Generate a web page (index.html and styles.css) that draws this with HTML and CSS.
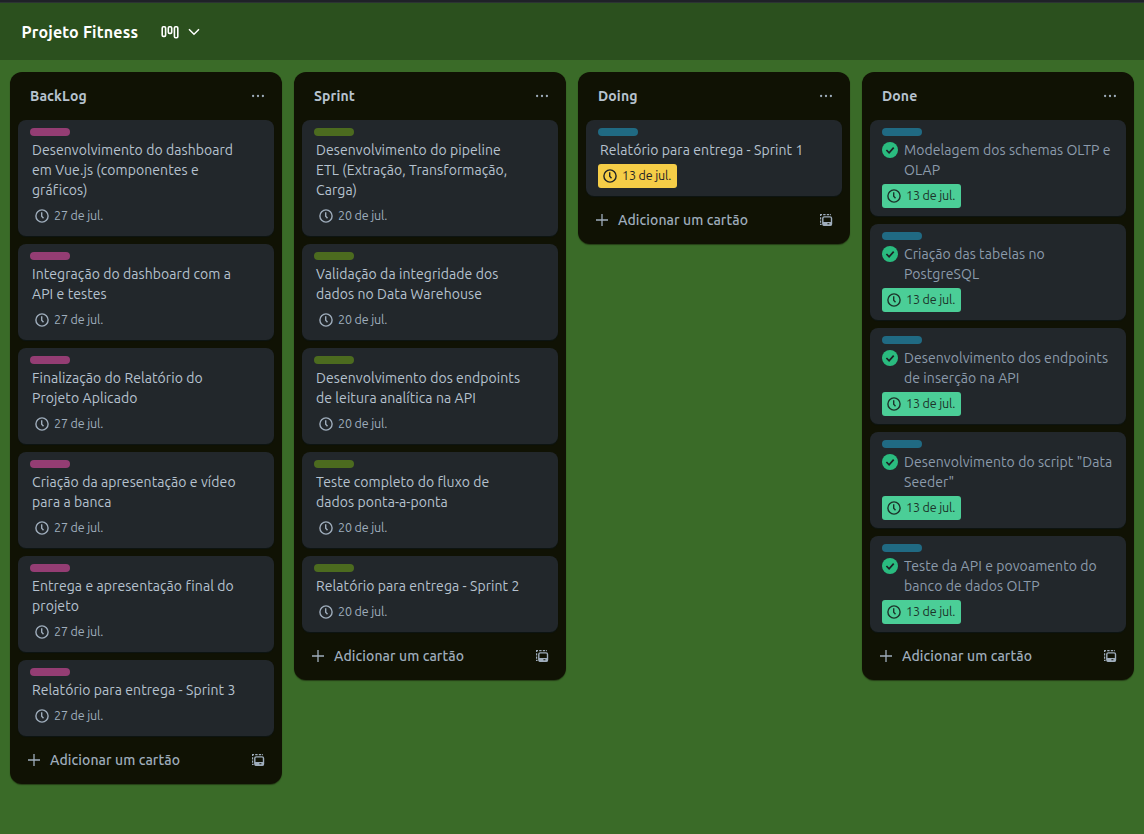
FILE: index.html
```
<!DOCTYPE html>
<html lang="pt-BR">
<head>
<meta charset="utf-8">
<title>Projeto Fitness</title>
<link rel="stylesheet" href="styles.css">
</head>
<body>
<svg class="sprite" aria-hidden="true">
  <symbol id="clock" viewBox="0 0 16 16"><circle cx="8" cy="8" r="6.1" fill="none" stroke="currentColor" stroke-width="1.4"/><path d="M7.7 4.2v4.1l1.8 1.9" fill="none" stroke="currentColor" stroke-width="1.4"/></symbol>
  <symbol id="dots" viewBox="0 0 16 16"><g fill="currentColor"><circle cx="3.1" cy="8" r="1.15"/><circle cx="8" cy="8" r="1.15"/><circle cx="12.9" cy="8" r="1.15"/></g></symbol>
  <symbol id="plus" viewBox="0 0 16 16"><path d="M8 2v12M2 8h12" fill="none" stroke="currentColor" stroke-width="1.3"/></symbol>
  <symbol id="template" viewBox="0 0 16 16"><g fill="none" stroke="currentColor" stroke-width="1.2"><path d="M2.6 4V2.6H4M5.2 2.6h2.4M8.8 2.6h2.4M2.6 5.2v2.2M2.6 8.6v2.2M2.6 11.8v.6h1M12 2.6h.8"/><rect x="4.8" y="4.9" width="8.7" height="8.4" rx="1.4" stroke-width="1.4"/></g><path d="M5 10h8.4v3.4H5zM9.4 11.2v1.2h2v-1.2z" fill="currentColor" fill-rule="evenodd"/></symbol>
  <symbol id="check" viewBox="0 0 16 16"><circle cx="8" cy="8" r="8" fill="#2abb7f"/><path d="M4.4 8l2.7 2.8 4.6-5.2" fill="none" stroke="#1d2125" stroke-width="1.7"/></symbol>
</svg>
<div class="topbar"></div>
<header class="board-header">
  <h1 class="board-title">Projeto Fitness</h1>
  <svg class="view-icon" viewBox="0 0 18 14"><g fill="none" stroke="currentColor" stroke-width="1.6"><rect x="1.2" y="1.7" width="3.4" height="9.7" rx="1.2"/><rect x="7.3" y="1.7" width="3.4" height="6.7" rx="1.2"/><rect x="13.4" y="1.7" width="3.4" height="11" rx="1.2"/></g></svg>
  <svg class="chevron" viewBox="0 0 12 8"><path d="M1 1.3l5 5 5-5" fill="none" stroke="currentColor" stroke-width="1.5"/></svg>
</header>
<main class="board">
  <section class="list pink">
    <div class="list-head"><h2>BackLog</h2><svg class="i16"><use href="#dots"/></svg></div>
    <article class="card"><i class="label"></i><p>Desenvolvimento do dashboard<br>em Vue.js (componentes e<br>gráficos)</p><span class="due"><svg class="i16"><use href="#clock"/></svg><b>27 de jul.</b></span></article>
    <article class="card"><i class="label"></i><p>Integração do dashboard com a<br>API e testes</p><span class="due"><svg class="i16"><use href="#clock"/></svg><b>27 de jul.</b></span></article>
    <article class="card"><i class="label"></i><p>Finalização do Relatório do<br>Projeto Aplicado</p><span class="due"><svg class="i16"><use href="#clock"/></svg><b>27 de jul.</b></span></article>
    <article class="card"><i class="label"></i><p>Criação da apresentação e vídeo<br>para a banca</p><span class="due"><svg class="i16"><use href="#clock"/></svg><b>27 de jul.</b></span></article>
    <article class="card"><i class="label"></i><p>Entrega e apresentação final do<br>projeto</p><span class="due"><svg class="i16"><use href="#clock"/></svg><b>27 de jul.</b></span></article>
    <article class="card"><i class="label"></i><p>Relatório para entrega - Sprint 3</p><span class="due"><svg class="i16"><use href="#clock"/></svg><b>27 de jul.</b></span></article>
    <div class="list-foot"><svg class="i16"><use href="#plus"/></svg><span>Adicionar um cartão</span><svg class="i16"><use href="#template"/></svg></div>
  </section>
  <section class="list lime">
    <div class="list-head"><h2>Sprint</h2><svg class="i16"><use href="#dots"/></svg></div>
    <article class="card"><i class="label"></i><p>Desenvolvimento do pipeline<br>ETL (Extração, Transformação,<br>Carga)</p><span class="due"><svg class="i16"><use href="#clock"/></svg><b>20 de jul.</b></span></article>
    <article class="card"><i class="label"></i><p>Validação da integridade dos<br>dados no Data Warehouse</p><span class="due"><svg class="i16"><use href="#clock"/></svg><b>20 de jul.</b></span></article>
    <article class="card"><i class="label"></i><p>Desenvolvimento dos endpoints<br>de leitura analítica na API</p><span class="due"><svg class="i16"><use href="#clock"/></svg><b>20 de jul.</b></span></article>
    <article class="card"><i class="label"></i><p>Teste completo do fluxo de<br>dados ponta-a-ponta</p><span class="due"><svg class="i16"><use href="#clock"/></svg><b>20 de jul.</b></span></article>
    <article class="card"><i class="label"></i><p>Relatório para entrega - Sprint 2</p><span class="due"><svg class="i16"><use href="#clock"/></svg><b>20 de jul.</b></span></article>
    <div class="list-foot"><svg class="i16"><use href="#plus"/></svg><span>Adicionar um cartão</span><svg class="i16"><use href="#template"/></svg></div>
  </section>
  <section class="list blue">
    <div class="list-head"><h2>Doing</h2><svg class="i16"><use href="#dots"/></svg></div>
    <article class="card"><i class="label"></i><p>Relatório para entrega - Sprint 1</p><span class="due soon"><svg class="i16"><use href="#clock"/></svg><b>13 de jul.</b></span></article>
    <div class="list-foot"><svg class="i16"><use href="#plus"/></svg><span>Adicionar um cartão</span><svg class="i16"><use href="#template"/></svg></div>
  </section>
  <section class="list blue">
    <div class="list-head"><h2>Done</h2><svg class="i16"><use href="#dots"/></svg></div>
    <article class="card done"><i class="label"></i><div class="row"><svg class="i16"><use href="#check"/></svg><p>Modelagem dos schemas OLTP e<br>OLAP</p></div><span class="due complete"><svg class="i16"><use href="#clock"/></svg><b>13 de jul.</b></span></article>
    <article class="card done"><i class="label"></i><div class="row"><svg class="i16"><use href="#check"/></svg><p>Criação das tabelas no<br>PostgreSQL</p></div><span class="due complete"><svg class="i16"><use href="#clock"/></svg><b>13 de jul.</b></span></article>
    <article class="card done"><i class="label"></i><div class="row"><svg class="i16"><use href="#check"/></svg><p>Desenvolvimento dos endpoints<br>de inserção na API</p></div><span class="due complete"><svg class="i16"><use href="#clock"/></svg><b>13 de jul.</b></span></article>
    <article class="card done"><i class="label"></i><div class="row"><svg class="i16"><use href="#check"/></svg><p>Desenvolvimento do script "Data<br>Seeder"</p></div><span class="due complete"><svg class="i16"><use href="#clock"/></svg><b>13 de jul.</b></span></article>
    <article class="card done"><i class="label"></i><div class="row"><svg class="i16"><use href="#check"/></svg><p>Teste da API e povoamento do<br>banco de dados OLTP</p></div><span class="due complete"><svg class="i16"><use href="#clock"/></svg><b>13 de jul.</b></span></article>
    <div class="list-foot"><svg class="i16"><use href="#plus"/></svg><span>Adicionar um cartão</span><svg class="i16"><use href="#template"/></svg></div>
  </section>
</main>
</body>
</html>
```
FILE: styles.css
```
* { box-sizing: border-box; margin: 0; padding: 0; }
body { height: 834px; overflow: hidden; background: #3a6b28; color: #b6c2cf; font: 14px/20px Ubuntu, "Noto Sans", sans-serif; }
.sprite { display: none; }
.i16 { width: 16px; height: 16px; flex: none; }
.topbar { height: 3px; background: #1f2128; border-bottom: 1px solid #2c3333; }
.board-header { height: 57px; display: flex; align-items: center; padding-left: 21px; background: #2b501e; color: #fff; }
.board-title { width: 140px; padding-left: .5px; font-size: 16px; line-height: 24px; font-weight: 700; letter-spacing: .18px; white-space: nowrap; }
.view-icon { width: 18px; height: 14px; }
.chevron { width: 12px; height: 8px; margin-left: 9px; }
.board { display: flex; align-items: flex-start; gap: 12px; padding: 12px 10px; }
.list { width: 272px; flex: none; display: flex; flex-direction: column; gap: 8px; padding: 0 8px; border-radius: 12px; background: #101204; box-shadow: 0 1px 1px #10120480; }
.pink { --label: #943d73; }
.lime { --label: #4c6b1f; }
.blue { --label: #206a83; }
.list-head { height: 40px; display: flex; align-items: center; justify-content: space-between; padding: 8px 8px 0 12px; }
h2 { font-size: 14px; line-height: 20px; font-weight: 700; letter-spacing: .12px; }
.list-head svg, .list-foot { color: #9fadbc; }
.card { display: flex; flex-direction: column; align-items: flex-start; padding: 8px 12px; border-radius: 8px; background: #22272b; box-shadow: 0 1px 1px #091e4240; }
.label { width: 40px; height: 8px; margin-bottom: 4px; border-radius: 4px; background: var(--label); }
.card p { padding-left: 2px; white-space: nowrap; letter-spacing: .075px; }
.row { display: flex; gap: 6px; }
.row svg { margin-top: 2px; }
.card.done p { padding-left: 0; color: #8c9bab; }
.due { height: 24px; margin-top: 4px; display: flex; align-items: center; gap: 4px; padding: 0 6px 0 4px; border-radius: 3px; color: #9fadbc; }
.due b { padding-bottom: 2px; font-weight: 400; font-size: 12.5px; line-height: 20px; letter-spacing: -.15px; white-space: nowrap; }
.soon, .complete { width: 79px; color: #1d2125; }
.soon { background: #f5cd47; }
.complete { background: #4bce97; color: #1c3329; }
.list-foot { height: 40px; display: flex; align-items: center; gap: 8px; padding: 0 8px 8px; font-weight: 500; }
.list-foot span { flex: 1; letter-spacing: .1px; white-space: nowrap; }
```
